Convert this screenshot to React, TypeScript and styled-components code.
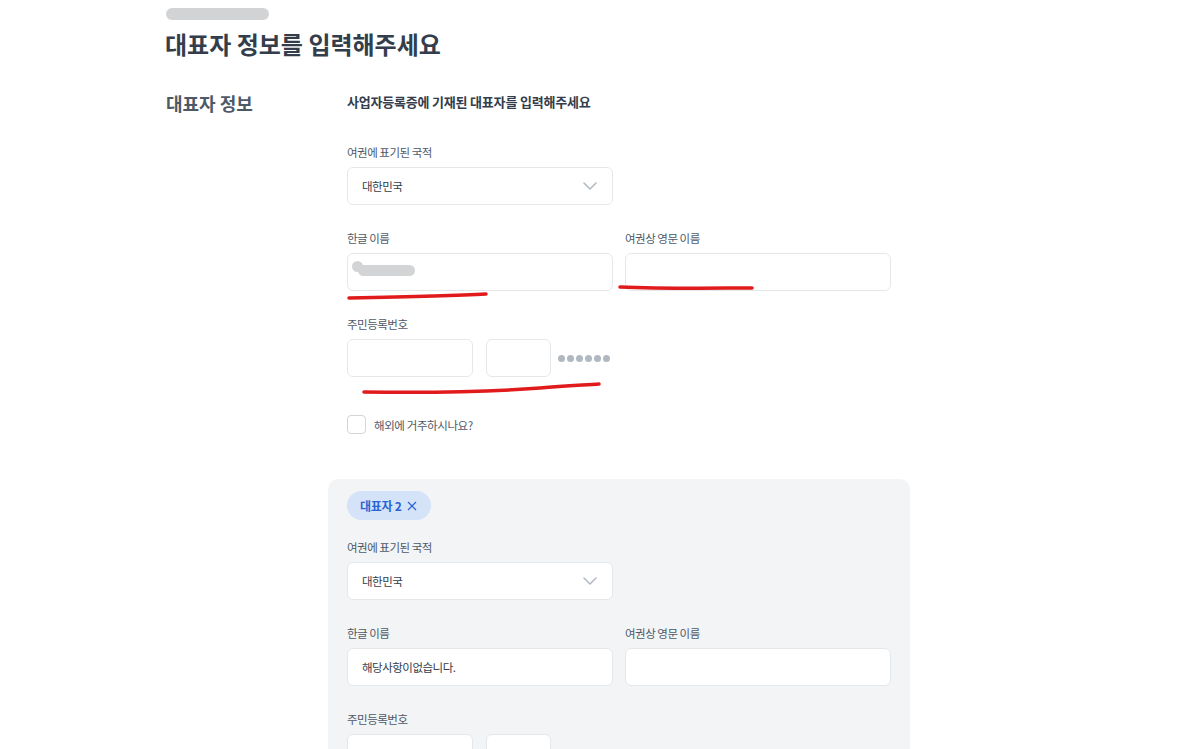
import styled, { createGlobalStyle } from "styled-components";

const GlobalStyle = createGlobalStyle`
    html, body {
        margin: 0;
        padding: 0;
        overflow: hidden;
        background: #fff;
    }
    body {
        font-family: "Noto Sans CJK KR", "Noto Sans", sans-serif;
        color: #333d4b;
    }
    * {
        box-sizing: border-box;
    }
`;

const Page = styled.div`
    position: relative;
    width: 1177px;
    min-height: 749px;
    padding: 8px 0 0 166px;
`;

const Redaction = styled.div<{ $w: number; $h: number }>`
    width: ${(p) => p.$w}px;
    height: ${(p) => p.$h}px;
    border-radius: ${(p) => p.$h / 2}px;
    background: #d2d3d5;
`;

const Title = styled.h1`
    margin: 8px 0 0 -1px;
    font-size: 24px;
    line-height: 31px;
    font-weight: 700;
    color: #333d4b;
`;

const Section = styled.section`
    display: grid;
    grid-template-columns: 181px 544px;
    margin-top: 32px;
`;

const SectionTitle = styled.h2`
    margin: 0;
    font-size: 18px;
    line-height: 24px;
    font-weight: 700;
    color: #4e5968;
`;

const Column = styled.div`
    display: flex;
    flex-direction: column;
    padding-top: 2px;
`;

const Description = styled.p`
    margin: 0 0 33px;
    font-size: 13px;
    line-height: 18px;
    font-weight: 600;
    letter-spacing: -0.2px;
    color: #333d4b;
`;

const Fields = styled.div`
    display: flex;
    flex-direction: column;
    gap: 25px;
`;

const Row = styled.div`
    display: grid;
    grid-template-columns: 266px 266px;
    column-gap: 12px;
`;

const Field = styled.div`
    display: flex;
    flex-direction: column;
    align-items: flex-start;
    gap: 6px;
`;

const Label = styled.label`
    font-size: 11.5px;
    line-height: 17px;
    letter-spacing: -0.5px;
    color: #4e5968;
`;

const Box = styled.div<{ $w?: number }>`
    position: relative;
    width: ${(p) => (p.$w ? `${p.$w}px` : "100%")};
    height: 38px;
    border: 1px solid #e5e8eb;
    border-radius: 6px;
    background: #fff;
    display: flex;
    align-items: center;
    justify-content: space-between;
    padding: 0 15px 0 14px;
    font-size: 11.5px;
    letter-spacing: -0.5px;
    color: #333d4b;
`;

const Blur = styled.span`
    position: absolute;
    left: 10px;
    top: 11px;
    width: 57px;
    height: 11px;
    border-radius: 6px;
    background: #d3d4d6;
    &::before {
        content: "";
        position: absolute;
        left: -6px;
        top: -4px;
        width: 11px;
        height: 11px;
        border-radius: 50%;
        background: #d3d4d6;
    }
`;

const IdRow = styled.div`
    display: flex;
    align-items: center;
`;

const Dots = styled.div`
    display: flex;
    gap: 2px;
    margin-left: 7px;
    span {
        width: 7px;
        height: 7px;
        border-radius: 50%;
        background: #b0b8c1;
    }
`;

const CheckRow = styled.label`
    display: flex;
    align-items: center;
    gap: 8px;
    margin-top: 38px;
    font-size: 11.5px;
    letter-spacing: -0.4px;
    color: #4e5968;
`;

const CheckBox = styled.span`
    width: 19px;
    height: 19px;
    border: 1.5px solid #d1d6db;
    border-radius: 4px;
    background: #fff;
`;

const Panel = styled.div`
    margin: 45px 0 0 -19px;
    width: 582px;
    padding: 12px 19px 40px;
    border-radius: 10px;
    background: #f2f4f6;
    display: flex;
    flex-direction: column;
`;

const Chip = styled.div`
    align-self: flex-start;
    display: flex;
    align-items: center;
    gap: 6px;
    height: 29px;
    padding: 0 14px 0 13px;
    border-radius: 15px;
    background: #d4e3f8;
    color: #2a63d4;
    font-size: 12px;
    font-weight: 700;
    letter-spacing: -0.3px;
    margin-bottom: 19px;
`;

const Marks = styled.svg`
    position: absolute;
    left: 0;
    top: 0;
    pointer-events: none;
`;

const Chevron = () => (
    <svg width="14" height="8" viewBox="0 0 14 8" fill="none">
        <path d="M1 1l6 6 6-6" stroke="#b0b8c1" strokeWidth="1.5" strokeLinecap="round" strokeLinejoin="round" />
    </svg>
);

function NationSelect() {
    return (
        <Field>
            <Label>여권에 표기된 국적</Label>
            <Box $w={266}>
                <span>대한민국</span>
                <Chevron />
            </Box>
        </Field>
    );
}

function IdField({ dots }: { dots: boolean }) {
    return (
        <Field>
            <Label>주민등록번호</Label>
            <IdRow>
                <Box $w={126} />
                <Box $w={65} style={{ marginLeft: 13 }} />
                {dots && (
                    <Dots>
                        {Array.from({ length: 6 }).map((_, i) => (
                            <span key={i} />
                        ))}
                    </Dots>
                )}
            </IdRow>
        </Field>
    );
}

export default function App() {
    return (
        <>
            <GlobalStyle />
            <Page>
                <Redaction $w={103} $h={12} />
                <Title>대표자 정보를 입력해주세요</Title>
                <Section>
                    <SectionTitle>대표자 정보</SectionTitle>
                    <Column>
                        <Description>사업자등록증에 기재된 대표자를 입력해주세요</Description>
                        <Fields>
                            <NationSelect />
                            <Row>
                                <Field>
                                    <Label>한글 이름</Label>
                                    <Box>
                                        <Blur />
                                    </Box>
                                </Field>
                                <Field>
                                    <Label>여권상 영문 이름</Label>
                                    <Box />
                                </Field>
                            </Row>
                            <IdField dots />
                        </Fields>
                        <CheckRow>
                            <CheckBox />
                            해외에 거주하시나요?
                        </CheckRow>
                        <Panel>
                            <Chip>
                                대표자 2
                                <svg width="10" height="10" viewBox="0 0 10 10">
                                    <path d="M1 1l8 8M9 1l-8 8" stroke="#2a63d4" strokeWidth="1.2" />
                                </svg>
                            </Chip>
                            <Fields>
                                <NationSelect />
                                <Row>
                                    <Field>
                                        <Label>한글 이름</Label>
                                        <Box>해당사항이없습니다.</Box>
                                    </Field>
                                    <Field>
                                        <Label>여권상 영문 이름</Label>
                                        <Box />
                                    </Field>
                                </Row>
                                <IdField dots />
                            </Fields>
                        </Panel>
                    </Column>
                </Section>
                <Marks width="1177" height="749" viewBox="0 0 1177 749">
                    <g stroke="#e11b1b" strokeWidth="3.5" strokeLinecap="round" fill="none">
                        <path d="M349 298 C 400 297, 450 296, 486 294" />
                        <path d="M620 287 C 670 289, 720 288, 752 288" />
                        <path d="M364 392 C 430 393, 500 391, 540 388 C 565 386, 585 385, 599 384" />
                    </g>
                </Marks>
            </Page>
        </>
    );
}
